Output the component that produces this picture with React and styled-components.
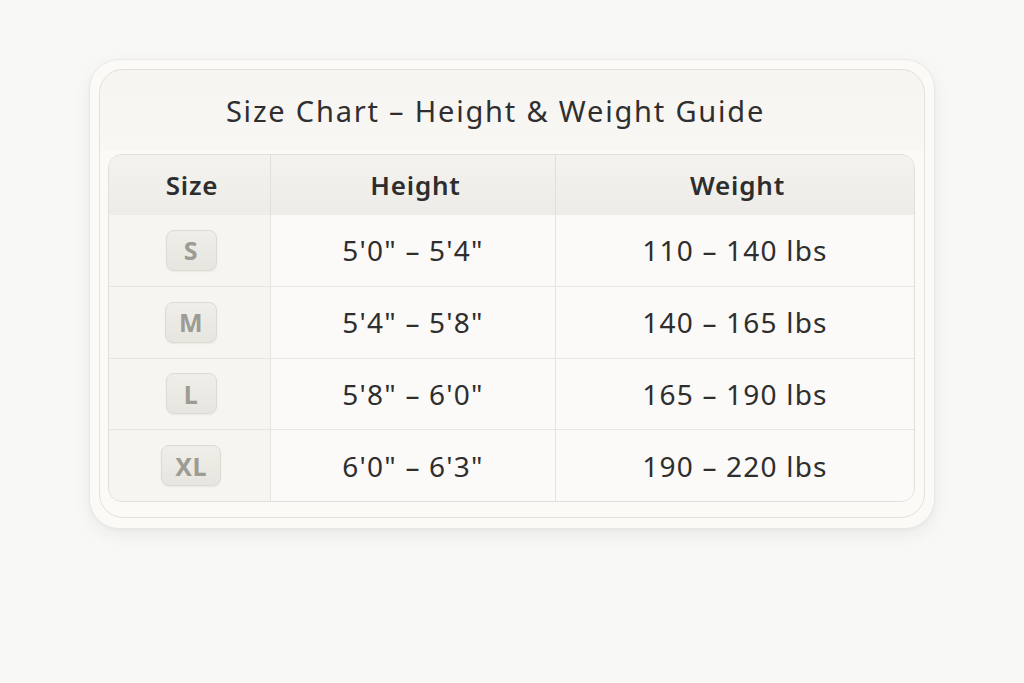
import React from "react";
import styled, { createGlobalStyle } from "styled-components";

const rows = [
  { size: "S", height: "5'0\" – 5'4\"", weight: "110 – 140 lbs" },
  { size: "M", height: "5'4\" – 5'8\"", weight: "140 – 165 lbs" },
  { size: "L", height: "5'8\" – 6'0\"", weight: "165 – 190 lbs" },
  { size: "XL", height: "6'0\" – 6'3\"", weight: "190 – 220 lbs" },
];

const GlobalStyle = createGlobalStyle`
  html, body {
    margin: 0;
    background: #f8f8f7;
  }
  body {
    font-family: "Noto Sans", "Open Sans", sans-serif;
    color: #2e2e2e;
  }
`;

const App = () => {
  return (
    <>
      <GlobalStyle />
      <Page>
        <Card>
          <Inner>
            <Title>Size Chart – Height &amp; Weight Guide</Title>
            <Table>
              <HeadRow>
                <HeadCell>Size</HeadCell>
                <HeadCell>Height</HeadCell>
                <HeadCell>Weight</HeadCell>
              </HeadRow>
              {rows.map((r, i) => (
                <Row key={r.size} last={i === rows.length - 1}>
                  <SizeCell>
                    <Badge>{r.size}</Badge>
                  </SizeCell>
                  <Cell>{r.height}</Cell>
                  <Cell>{r.weight}</Cell>
                </Row>
              ))}
            </Table>
          </Inner>
        </Card>
      </Page>
    </>
  );
};

const Page = styled.div`
  width: 1024px;
  height: 683px;
  padding: 59px 0 0 89px;
  box-sizing: border-box;
`;

const Card = styled.div`
  width: 846px;
  height: 470px;
  box-sizing: border-box;
  padding: 9px 9px 10px 9px;
  background: #fbfaf7;
  border: 1px solid #ebe9e4;
  border-radius: 30px;
  box-shadow: 0 6px 18px rgba(0, 0, 0, 0.06), 0 1px 3px rgba(0, 0, 0, 0.04);
`;

const Inner = styled.div`
  height: 100%;
  box-sizing: border-box;
  border: 1px solid #e4e1da;
  border-radius: 24px;
  background: linear-gradient(#f6f5f2, #f8f7f4 80px, #fbfaf7 81px);
  padding: 0 9px 15px 8px;
  display: flex;
  flex-direction: column;
`;

const Title = styled.h1`
  margin: 0;
  height: 84px;
  display: flex;
  align-items: center;
  justify-content: center;
  font-size: 29px;
  font-weight: 400;
  letter-spacing: 1.8px;
  color: #2f2f2f;
  padding: 0 32px 4px 0;
  box-sizing: border-box;
`;

const Table = styled.div`
  flex: 1;
  border: 1px solid #e2dfd8;
  border-radius: 14px;
  overflow: hidden;
  background: #f9f8f5;
  display: flex;
  flex-direction: column;
`;

const HeadRow = styled.div`
  display: grid;
  grid-template-columns: 161px 285px 1fr;
  height: 60px;
  background: linear-gradient(#f3f2ee, #eeece8);
`;

const HeadCell = styled.div`
  display: flex;
  align-items: center;
  justify-content: center;
  font-size: 26px;
  font-weight: 600;
  letter-spacing: 0.8px;
  color: #2d2d2d;
  padding-left: 5px;
  & + & {
    border-left: 1px solid #e2dfd8;
  }
`;

const Row = styled.div`
  display: grid;
  grid-template-columns: 161px 285px 1fr;
  flex: 1;
  border-bottom: ${(p) => (p.last ? "none" : "1px solid #e8e6e1")};
`;

const Cell = styled.div`
  display: flex;
  align-items: center;
  justify-content: center;
  font-size: 28px;
  letter-spacing: 1.2px;
  color: #2e2e2e;
  border-left: 1px solid #e6e4de;
  background: #fbfaf8;
`;

const SizeCell = styled.div`
  display: flex;
  align-items: center;
  justify-content: center;
  padding-left: 3px;
  background: #f6f5f2;
`;

const Badge = styled.div`
  min-width: 51px;
  height: 41px;
  padding: 0 13px;
  box-sizing: border-box;
  display: flex;
  align-items: center;
  justify-content: center;
  border-radius: 8px;
  background: linear-gradient(#efeee9, #e7e5df);
  border: 1px solid #dddad2;
  box-shadow: 0 1px 2px rgba(0, 0, 0, 0.06);
  font-size: 25px;
  font-weight: 700;
  letter-spacing: 0.5px;
  color: #9d9b93;
`;

export default App;
